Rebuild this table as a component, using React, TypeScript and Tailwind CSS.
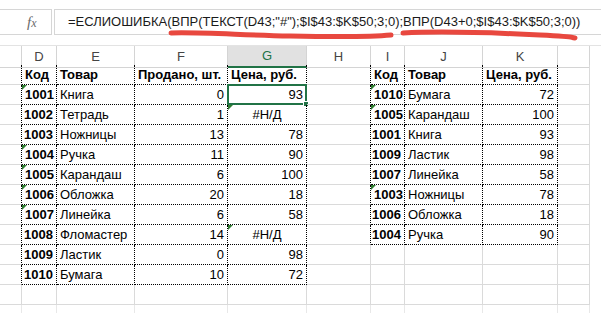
import * as React from "react";

type Cell = {
  v: string;
  kind: "text" | "num" | "code" | "err" | "head";
  tri?: boolean;
};

const LEFT: Cell[][] = [
  [
    { v: "Код", kind: "head" },
    { v: "Товар", kind: "head" },
    { v: "Продано, шт.", kind: "head" },
    { v: "Цена, руб.", kind: "head" },
  ],
  [{ v: "1001", kind: "code", tri: true }, { v: "Книга", kind: "text" }, { v: "0", kind: "num" }, { v: "93", kind: "num" }],
  [{ v: "1002", kind: "num" }, { v: "Тетрадь", kind: "text" }, { v: "1", kind: "num" }, { v: "#Н/Д", kind: "err", tri: true }],
  [{ v: "1003", kind: "num" }, { v: "Ножницы", kind: "text" }, { v: "13", kind: "num" }, { v: "78", kind: "num" }],
  [{ v: "1004", kind: "code", tri: true }, { v: "Ручка", kind: "text" }, { v: "11", kind: "num" }, { v: "90", kind: "num" }],
  [{ v: "1005", kind: "code", tri: true }, { v: "Карандаш", kind: "text" }, { v: "6", kind: "num" }, { v: "100", kind: "num" }],
  [{ v: "1006", kind: "code", tri: true }, { v: "Обложка", kind: "text" }, { v: "20", kind: "num" }, { v: "18", kind: "num" }],
  [{ v: "1007", kind: "code", tri: true }, { v: "Линейка", kind: "text" }, { v: "6", kind: "num" }, { v: "58", kind: "num" }],
  [{ v: "1008", kind: "num" }, { v: "Фломастер", kind: "text" }, { v: "14", kind: "num" }, { v: "#Н/Д", kind: "err", tri: true }],
  [{ v: "1009", kind: "num" }, { v: "Ластик", kind: "text" }, { v: "0", kind: "num" }, { v: "98", kind: "num" }],
  [{ v: "1010", kind: "num" }, { v: "Бумага", kind: "text" }, { v: "10", kind: "num" }, { v: "72", kind: "num" }],
];

const RIGHT: Cell[][] = [
  [
    { v: "Код", kind: "head" },
    { v: "Товар", kind: "head" },
    { v: "Цена, руб.", kind: "head" },
  ],
  [{ v: "1010", kind: "code", tri: true }, { v: "Бумага", kind: "text" }, { v: "72", kind: "num" }],
  [{ v: "1005", kind: "code", tri: true }, { v: "Карандаш", kind: "text" }, { v: "100", kind: "num" }],
  [{ v: "1001", kind: "num" }, { v: "Книга", kind: "text" }, { v: "93", kind: "num" }],
  [{ v: "1009", kind: "num" }, { v: "Ластик", kind: "text" }, { v: "98", kind: "num" }],
  [{ v: "1007", kind: "num" }, { v: "Линейка", kind: "text" }, { v: "58", kind: "num" }],
  [{ v: "1003", kind: "code", tri: true }, { v: "Ножницы", kind: "text" }, { v: "78", kind: "num" }],
  [{ v: "1006", kind: "num" }, { v: "Обложка", kind: "text" }, { v: "18", kind: "num" }],
  [{ v: "1004", kind: "num" }, { v: "Ручка", kind: "text" }, { v: "90", kind: "num" }],
];

const HEADERS = ["", "D", "E", "F", "G", "H", "I", "J", "K", ""];
const ROWS = 12;

const GRID = "grid grid-cols-[22px_35px_78px_93px_79px_64px_34px_78px_75px_32px]";
const PLAIN = "border-r border-b border-[#dadada]";
const TABLE = "border-r border-b border-dotted border-black";
const EDGE = "border-r border-b border-[#dadada] border-r-black [border-right-style:dotted]";

function Triangle() {
  return (
    <span className="absolute left-0 top-0 h-0 w-0 border-t-[5px] border-r-[5px] border-t-[#2f7d32] border-r-transparent" />
  );
}

function CellBox({ cell, className, selected }: { cell?: Cell; className: string; selected?: boolean }) {
  let align = "justify-start pl-[3px]";
  if (cell?.kind === "num") align = "justify-end pr-[3px]";
  if (cell?.kind === "err") align = "justify-center";
  // codes in the first column are bold whether they are text or numbers
  const bold = cell?.kind === "head" || cell?.kind === "code" || (cell?.kind === "num" && cell.v.length === 4);
  return (
    <div className={`relative flex h-5 items-center whitespace-nowrap ${align} ${className}`}>
      {cell?.tri ? <Triangle /> : null}
      {cell ? <span className={bold ? "font-bold" : ""}>{cell.v}</span> : null}
      {selected ? (
        <span className="absolute -left-[1px] -top-[1px] -right-[1px] -bottom-[1px] border-2 border-[#217346]">
          <span className="absolute -bottom-[4px] -right-[4px] h-[6px] w-[6px] border border-white bg-[#217346]" />
        </span>
      ) : null}
    </div>
  );
}

function SheetRow({ r }: { r: number }) {
  const left = LEFT[r];
  const right = RIGHT[r];
  return (
    <div className={GRID}>
      <CellBox className={left ? EDGE : PLAIN} />
      {[0, 1, 2, 3].map((c) => (
        <CellBox key={c} cell={left?.[c]} className={left ? TABLE : PLAIN} selected={r === 1 && c === 3} />
      ))}
      <CellBox className={right ? EDGE : PLAIN} />
      {[0, 1, 2].map((c) => (
        <CellBox key={c} cell={right?.[c]} className={right ? TABLE : PLAIN} />
      ))}
      <CellBox className={PLAIN} />
    </div>
  );
}

export default function App() {
  return (
    <div className="relative h-[318px] w-[601px] overflow-hidden bg-white font-['Liberation_Sans',Arial,sans-serif] text-[13px] text-black">
      <div className="flex h-[45px] items-start pt-[9px]">
        <div className="flex h-[26px] w-[52px] items-center border-y border-r border-[#d6d6d6] pl-[27px]">
          <span className="font-['Liberation_Serif',serif] text-[15px] italic text-[#6b6b6b]">
            f<span className="text-[12px]">x</span>
          </span>
        </div>
        <div className="ml-[2px] flex h-[26px] flex-1 items-center border-y border-l border-[#d6d6d6] pl-[13px] text-[13px] text-[#1a1a1a]">
          =ЕСЛИОШИБКА(ВПР(ТЕКСТ(D43;"#");$I$43:$K$50;3;0);ВПР(D43+0;$I$43:$K$50;3;0))
        </div>
      </div>

      <div className={`${GRID} h-5 border-t border-[#e3e3e3] text-[#444]`}>
        {HEADERS.map((h, i) =>
          h === "G" ? (
            <div
              key={i}
              className="flex items-center justify-center border-r border-[#d4d4d4] border-b-2 border-b-[#217346] bg-[#e1e1e1] text-[#217346]"
            >
              {h}
            </div>
          ) : (
            <div key={i} className="flex items-center justify-center border-r border-b border-[#d4d4d4]">
              {h}
            </div>
          )
        )}
      </div>

      {Array.from({ length: ROWS }, (_, r) => (
        <SheetRow key={r} r={r} />
      ))}
      <div className={`${GRID} h-[8px] opacity-60`}>
        {HEADERS.map((_, i) => (
          <div key={i} className="border-r border-[#dadada]" />
        ))}
      </div>

      <svg className="pointer-events-none absolute left-0 top-0" width="601" height="60">
        <path
          d="M171 33 C 200 32, 240 35, 290 36 S 370 37, 391 35"
          fill="none"
          stroke="#e8483f"
          strokeWidth="5"
          strokeLinecap="round"
        />
        <path
          d="M403 33 C 440 31, 500 33, 540 35 S 568 37, 575 38"
          fill="none"
          stroke="#e8483f"
          strokeWidth="5"
          strokeLinecap="round"
        />
      </svg>
    </div>
  );
}
